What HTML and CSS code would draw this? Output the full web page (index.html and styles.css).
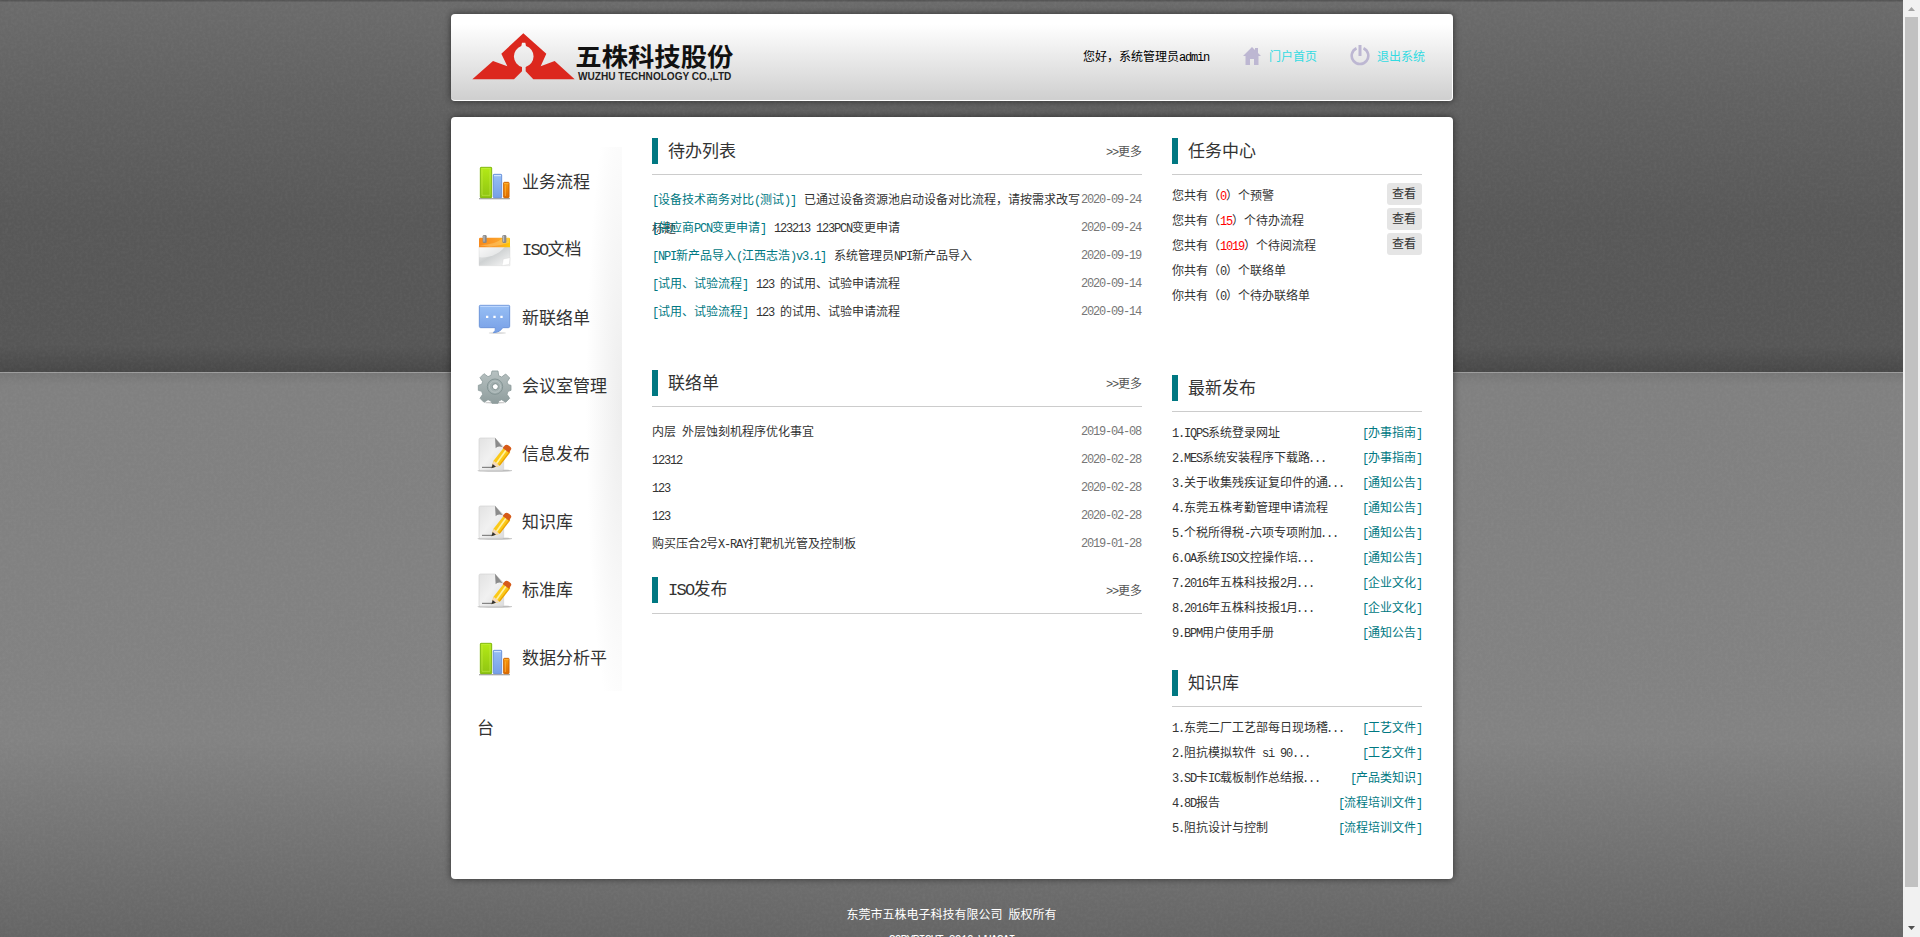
FILE: index.html
```html
<!DOCTYPE html>
<html lang="zh-CN">
<head>
<meta charset="utf-8">
<title>五株科技股份</title>
<link rel="stylesheet" href="styles.css">
</head>
<body>
<svg class="defs" width="0" height="0" aria-hidden="true">
  <defs>
    <linearGradient id="green" x2="0" y2="1"><stop offset="0" stop-color="#b4ea16"/><stop offset="1" stop-color="#8fc412"/></linearGradient>
    <linearGradient id="blue" x2="0" y2="1"><stop offset="0" stop-color="#97bff5"/><stop offset="1" stop-color="#779fe6"/></linearGradient>
    <linearGradient id="orange" x2="0" y2="1"><stop offset="0" stop-color="#fb9a0c"/><stop offset="1" stop-color="#dd6a00"/></linearGradient>
    <linearGradient id="calTop" x2="1" y2="0"><stop offset="0" stop-color="#f68a1e"/><stop offset=".6" stop-color="#fba02a"/><stop offset="1" stop-color="#ffc800"/></linearGradient>
    <linearGradient id="paper" x2="1" y2="1"><stop offset="0" stop-color="#e2e2e2"/><stop offset=".5" stop-color="#f1f1f1"/><stop offset="1" stop-color="#dcdcdc"/></linearGradient>
    <linearGradient id="calBody" x2="1" y2="1"><stop offset="0" stop-color="#f4f4f4"/><stop offset=".45" stop-color="#cfd2d3"/><stop offset="1" stop-color="#f8f8f8"/></linearGradient>
    <linearGradient id="gearFill" x2="0" y2="1"><stop offset="0" stop-color="#b7c1c1"/><stop offset="1" stop-color="#8f9d9d"/></linearGradient>
    <symbol id="chart" viewBox="108 114 108 204">
      <path d="M117 264h93v4h-93z" fill="#a9a9a9"/>
      <rect x="121" y="172" width="34" height="91" rx="2" fill="url(#green)" stroke="#7fb70b" stroke-width="3"/>
      <path d="M124 175h28M126 178v78h24v-78" fill="none" stroke="#d0f55e" stroke-width="2" opacity=".7"/>
      <rect x="160" y="193" width="25" height="70" rx="2" fill="url(#blue)" stroke="#6d95dc" stroke-width="3"/>
      <path d="M162 197h21" stroke="#dcebff" stroke-width="3"/>
      <rect x="191" y="217" width="16" height="46" rx="2" fill="url(#orange)" stroke="#cf6500" stroke-width="3"/>
      <path d="M192 221h14M196 226v32" stroke="#ffc04c" stroke-width="2"/>
    </symbol>
    <symbol id="calendar" viewBox="108 114 108 204">
      <path d="M117 205h93v58h-93z" fill="url(#calBody)" stroke="#cfcfcf"/>
      <path d="M118 238c34 2 60-10 78-33h-78z" fill="#fff" opacity=".5"/>
      <path d="M186 263l4-20 20-4-2 20z" fill="#fff" stroke="#d0d0d0"/>
      <path d="M117 183q0-4 4-4h85q4 0 4 4v25h-93z" fill="url(#calTop)"/>
      <path d="M118 202q50-2 70-22h20v14q-30 10-60 12z" fill="#ffd27a" opacity=".45"/>
      <rect x="128" y="171" width="12" height="24" rx="4" fill="#888"/><rect x="187" y="171" width="12" height="24" rx="4" fill="#888"/>
      <path d="M132 173v18M191 173v18" stroke="#c9c9c9" stroke-width="3"/>
    </symbol>
    <symbol id="chat" viewBox="108 114 108 204">
      <ellipse cx="172" cy="261" rx="26" ry="3" fill="#ddd"/>
      <path d="M121 178h85q3 0 3 3v60q0 4-4 4h-17q-8 14-28 15q8-6 6-15h-44q-4 0-4-4v-60q0-3 3-3z" fill="url(#blue)" stroke="#6c95d9" stroke-width="3"/>
      <path d="M121 181h85" stroke="#c6ddff" stroke-width="3"/>
      <path d="M138 209h7v7h-7zM160 209h7v7h-7zM181 209h7v7h-7z" fill="#fff"/>
    </symbol>
    <symbol id="gear" viewBox="108 114 108 204">
      <ellipse cx="165" cy="266" rx="30" ry="3" fill="#ccc"/>
      <path d="M156 171h18l2 14 9 4 12-9 12 12-8 12 4 8 8 2v15l-9 3-3 9 8 12-12 12-12-8-9 4-2 7h-18l-3-7-9-4-12 8-12-12 8-12-3-9-10-3v-15l10-3 3-8-8-12 12-12 12 9 9-4z" fill="url(#gearFill)" stroke="#8d9b9b" stroke-width="2.5" stroke-linejoin="round"/>
      <circle cx="165" cy="218" r="23" fill="#a3b0b0" stroke="#849494" stroke-width="3"/>
      <circle cx="165" cy="218" r="17" fill="none" stroke="#b6c1c1" stroke-width="3"/>
      <circle cx="166" cy="218" r="9" fill="#fff" stroke="#7f8e8e" stroke-width="3"/>
    </symbol>
    <symbol id="note" viewBox="108 114 108 204">
      <ellipse cx="165" cy="266" rx="53" ry="3.5" fill="#bdbdbd"/>
      <path d="M121 168h44l26 27v65q0 5-5 5h-65q-4 0-4-5v-87q0-5 4-5z" fill="url(#paper)" stroke="#d2d2d2" stroke-width="2"/>
      <path d="M165 167l23 28q-16-5-21 4z" fill="#8b8b8b"/>
      <path d="M126 256h34" stroke="#555" stroke-width="2.5"/>
      <path d="M155 257l5-20 33-42 18 13-34 44z" fill="#fbc918"/>
      <path d="M169 245l31-43" stroke="#fff1a0" stroke-width="5"/>
      <path d="M178 250l31-40" stroke="#eba400" stroke-width="4"/>
      <path d="M155 257l6-21 17 15z" fill="#f4d9bd"/>
      <path d="M154 259l4-13 10 8z" fill="#333"/>
      <path d="M188 198l7-8q4-4 12 1t7 10l-7 11z" fill="#d65a18"/>
    </symbol>
  </defs>
</svg>
<div class="screen">
  <div class="page">
    <svg class="grain" width="1903" height="937" aria-hidden="true">
      <filter id="grain" x="0" y="0" width="100%" height="100%"><feTurbulence type="fractalNoise" baseFrequency=".35" numOctaves="2" seed="4"/><feColorMatrix values="0 0 0 0 1  0 0 0 0 1  0 0 0 0 1  1 0 0 0 -.35"/></filter>
      <rect width="1903" height="937" filter="url(#grain)"/>
    </svg>
    <header class="header">
      <svg class="logo" width="262" height="50" viewBox="96 95 786 150">
        <path d="M250 99L319 160l-17 38 42-16 60 55H280l-23-24v-13a33 33 0 0 0 1-63l-2-10h-10l-2 10a33 33 0 0 0 2 63v13l-24 24H97l62-55 43 16-18-38z" fill="#dc281e"/>
        <text class="logo-cn" x="406" y="197" textLength="474" lengthAdjust="spacingAndGlyphs">五株科技股份</text>
        <text class="logo-en" x="414" y="238" textLength="460" lengthAdjust="spacingAndGlyphs">WUZHU TECHNOLOGY CO.,LTD</text>
      </svg>
      <span class="hello">您好，系统管理员<span class="m">admin</span></span>
      <a class="top-link home">
        <svg width="18" height="18" viewBox="0 0 18 18"><path d="M9 0l3 3V1h3v5l3 3h-2.500v9h-4.500v-6H7v6H2.500V9H0z" fill="#bdb7d2"/></svg>
        <span>门户首页</span>
      </a>
      <a class="top-link quit">
        <svg width="20" height="21" viewBox="0 0 20 21"><path d="M6.500 3.200a8.300 8.300 0 1 0 7 0" fill="none" stroke="#bdb7d2" stroke-width="2.600"/><path d="M8.500 0h3v11h-3z" fill="#bdb7d2"/></svg>
        <span>退出系统</span>
      </a>
    </header>
    <main class="main">
      <nav class="side">
        <ul class="menu">
          <li><svg><use href="#chart"/></svg><span>业务流程</span></li>
          <li><svg><use href="#calendar"/></svg><span><span class="m">ISO</span>文档</span></li>
          <li><svg><use href="#chat"/></svg><span>新联络单</span></li>
          <li><svg><use href="#gear"/></svg><span>会议室管理</span></li>
          <li><svg><use href="#note"/></svg><span>信息发布</span></li>
          <li><svg><use href="#note"/></svg><span>知识库</span></li>
          <li><svg><use href="#note"/></svg><span>标准库</span></li>
          <li><svg><use href="#chart"/></svg><span>数据分析平</span></li>
        </ul>
        <div class="menu-rest">台</div>
      </nav>
      <div class="middle">
        <section class="todo">
          <h2><span>待办列表</span><a class="more"><span class="m">&gt;&gt;</span>更多</a></h2>
          <ul class="list">
            <li><p><a><span class="m">[</span>设备技术商务对比<span class="m">(</span>测试<span class="m">)]</span></a>已通过设备资源池启动设备对比流程，请按需求改写标题</p><time>2020-09-24</time></li>
            <li><p><a><span class="m">[</span>供应商<span class="m">PCN</span>变更申请<span class="m">]</span></a><span class="m">123213 123PCN</span>变更申请</p><time>2020-09-24</time></li>
            <li><p><a><span class="m">[NPI</span>新产品导入<span class="m">(</span>江西志浩<span class="m">)v3.1]</span></a>系统管理员<span class="m">NPI</span>新产品导入</p><time>2020-09-19</time></li>
            <li><p><a><span class="m">[</span>试用、试验流程<span class="m">]</span></a><span class="m">123 </span>的试用、试验申请流程</p><time>2020-09-14</time></li>
            <li><p><a><span class="m">[</span>试用、试验流程<span class="m">]</span></a><span class="m">123 </span>的试用、试验申请流程</p><time>2020-09-14</time></li>
          </ul>
        </section>
        <section class="contact">
          <h2><span>联络单</span><a class="more"><span class="m">&gt;&gt;</span>更多</a></h2>
          <ul class="list">
            <li><p>内层<span class="m"> </span>外层蚀刻机程序优化事宜</p><time>2019-04-08</time></li>
            <li><p><span class="m">12312</span></p><time>2020-02-28</time></li>
            <li><p><span class="m">123</span></p><time>2020-02-28</time></li>
            <li><p><span class="m">123</span></p><time>2020-02-28</time></li>
            <li><p>购买压合<span class="m">2</span>号<span class="m">X-RAY</span>打靶机光管及控制板</p><time>2019-01-28</time></li>
          </ul>
        </section>
        <section>
          <h2><span><span class="m">ISO</span>发布</span><a class="more"><span class="m">&gt;&gt;</span>更多</a></h2>
        </section>
      </div>
      <div class="right">
        <section class="tasks">
          <h2><span>任务中心</span></h2>
          <ul class="short">
            <li><p>您共有（<b class="m">0</b>）个预警</p><button>查看</button></li>
            <li><p>您共有（<b class="m">15</b>）个待办流程</p><button>查看</button></li>
            <li><p>您共有（<b class="m">1019</b>）个待阅流程</p><button>查看</button></li>
            <li><p>你共有（<span class="m">0</span>）个联络单</p></li>
            <li><p>你共有（<span class="m">0</span>）个待办联络单</p></li>
          </ul>
        </section>
        <section class="news">
          <h2><span>最新发布</span></h2>
          <ul class="short">
            <li><p><span class="m">1.IQPS</span>系统登录网址</p><a><span class="m">[</span>办事指南<span class="m">]</span></a></li>
            <li><p><span class="m">2.MES</span>系统安装程序下载路<span class="m dots">...</span></p><a><span class="m">[</span>办事指南<span class="m">]</span></a></li>
            <li><p><span class="m">3.</span>关于收集残疾证复印件的通<span class="m dots">...</span></p><a><span class="m">[</span>通知公告<span class="m">]</span></a></li>
            <li><p><span class="m">4.</span>东莞五株考勤管理申请流程</p><a><span class="m">[</span>通知公告<span class="m">]</span></a></li>
            <li><p><span class="m">5.</span>个税所得税<span class="m">-</span>六项专项附加<span class="m dots">...</span></p><a><span class="m">[</span>通知公告<span class="m">]</span></a></li>
            <li><p><span class="m">6.OA</span>系统<span class="m">ISO</span>文控操作培<span class="m dots">...</span></p><a><span class="m">[</span>通知公告<span class="m">]</span></a></li>
            <li><p><span class="m">7.2016</span>年五株科技报<span class="m">2</span>月<span class="m dots">...</span></p><a><span class="m">[</span>企业文化<span class="m">]</span></a></li>
            <li><p><span class="m">8.2016</span>年五株科技报<span class="m">1</span>月<span class="m dots">...</span></p><a><span class="m">[</span>企业文化<span class="m">]</span></a></li>
            <li><p><span class="m">9.BPM</span>用户使用手册</p><a><span class="m">[</span>通知公告<span class="m">]</span></a></li>
          </ul>
        </section>
        <section>
          <h2><span>知识库</span></h2>
          <ul class="short">
            <li><p><span class="m">1.</span>东莞二厂工艺部每日现场稽<span class="m dots">...</span></p><a><span class="m">[</span>工艺文件<span class="m">]</span></a></li>
            <li><p><span class="m">2.</span>阻抗模拟软件<span class="m"> si 90...</span></p><a><span class="m">[</span>工艺文件<span class="m">]</span></a></li>
            <li><p><span class="m">3.SD</span>卡<span class="m">IC</span>载板制作总结报<span class="m dots">...</span></p><a><span class="m">[</span>产品类知识<span class="m">]</span></a></li>
            <li><p><span class="m">4.8D</span>报告</p><a><span class="m">[</span>流程培训文件<span class="m">]</span></a></li>
            <li><p><span class="m">5.</span>阻抗设计与控制</p><a><span class="m">[</span>流程培训文件<span class="m">]</span></a></li>
          </ul>
        </section>
      </div>
    </main>
    <footer class="footer">
      <div>东莞市五株电子科技有限公司<span class="m"> </span>版权所有</div>
      <div><span class="m">COPYRIGHT 2016 WUAGAI</span></div>
    </footer>
  </div>
  <div class="scrollbar">
    <svg width="17" height="17"><path d="M5 11h7L8.500 7z" fill="#a3a3a3"/></svg>
    <div class="thumb"></div>
    <svg width="17" height="17"><path d="M5 6h7L8.500 10z" fill="#505050"/></svg>
  </div>
</div>
</body>
</html>
```
FILE: styles.css
```css
* { box-sizing: border-box; margin: 0; padding: 0; }
html, body { height: 937px; overflow: hidden; }
body {
  font-family: "Liberation Serif", "Noto Sans CJK SC", sans-serif;
  font-size: 12px;
  color: #333;
}
ul { list-style: none; }
a { color: #007882; text-decoration: none; }
.defs { position: absolute; }
/* half-width runs: every character takes half an em */
.m, time {
  font-family: "Liberation Mono", monospace;
  letter-spacing: -.1em;
  white-space: pre;
}
.dots { margin-left: -2px; }
b.m { font-weight: normal; color: #f00; }

.screen { display: grid; grid-template-columns: 1903px 17px; height: 937px; }
.page {
  position: relative;
  height: 937px;
  overflow: hidden;
  padding-top: 14px;
  background: linear-gradient(180deg,
    #555 0, #555 1px, #6b6b6b 2px, #616161 100px, #585858 220px, #565656 345px,
    #484848 372px, #9c9c9c 372px, #9c9c9c 373px, #777 373px, #808080 385px,
    #828282 740px, #656565 937px);
}
.grain { position: absolute; left: 0; top: 0; opacity: .07; }

.header {
  position: relative;
  display: flex;
  align-items: center;
  width: 1002px;
  height: 87px;
  margin: 0 auto 16px 451px;
  padding-left: 21px;
  border: solid #fff;
  border-width: 0 1px 1px 0;
  border-radius: 4px;
  background: linear-gradient(#fff 12%, #d0d0d0 98%);
  box-shadow: 0 0 7px rgba(0, 0, 0, .55);
}
.logo { overflow: visible; }
.logo-cn { font: 700 74px "Noto Sans CJK SC", sans-serif; fill: #111; }
.logo-en { font: 700 31px "Liberation Sans", sans-serif; fill: #222; }
.hello { margin: -3px 0 0 349px; width: 160px; color: #000; white-space: nowrap; }
.top-link { display: flex; align-items: center; margin-top: -3px; color: #33dbe2; }
.home { gap: 8px; width: 107px; }
.quit { gap: 7px; }

.main {
  position: relative;
  display: flex;
  width: 1002px;
  height: 762px;
  margin-left: 451px;
  padding-top: 21px;
  border-radius: 4px;
  background: #fff;
  box-shadow: 0 0 7px rgba(0, 0, 0, .55);
}
.side { width: 146px; margin: 9px 30px 0 25px; font-size: 17px; }
.menu { background: radial-gradient(ellipse 36px 330px at 100% 48%, #ededed, #fff); }
.menu li { display: flex; align-items: center; height: 68px; white-space: nowrap; }
.menu li svg { width: 36px; height: 68px; margin: 1px 10px 0 0; flex: none; }
.menu li > span { line-height: 24px; margin-top: 3px; }
.menu-rest { line-height: 76px; margin-left: 1px; }

.middle { width: 490px; margin-right: 30px; }
.right { width: 250px; }
h2 {
  display: flex;
  align-items: center;
  height: 37px;
  padding-bottom: 11px;
  border-bottom: 1px solid #ccc;
  font-size: 17px;
  font-weight: 400;
  line-height: 22px;
}
h2::before { content: ""; width: 6px; height: 26px; margin-right: 10px; background: #007882; }
h2 > span { padding-top: 2px; }
.more { margin-left: auto; padding-top: 3px; font-size: 12px; color: #555; }
.list { padding-top: 11px; }
.list li { display: flex; justify-content: space-between; height: 28px; line-height: 28px; }
.list p { width: 430px; }
.list p a { margin-right: 8px; }
time { color: #777; margin-right: 1px; }
.todo { height: 232px; }
.contact { height: 207px; }
.short { padding-top: 8px; }
.short li { display: flex; justify-content: space-between; height: 25px; line-height: 26px; white-space: nowrap; }
.tasks { height: 237px; }
.news { height: 295px; }
button {
  width: 35px;
  height: 22px;
  padding-right: 1px;
  border: 0;
  border-radius: 3px;
  background: #e5e5e5;
  font: inherit;
  line-height: 22px;
  color: #333;
}
.footer {
  position: relative;
  padding-top: 24px;
  line-height: 24px;
  text-align: center;
  color: #fff;
}

.scrollbar { display: flex; flex-direction: column; background: #f1f1f1; }
.thumb { width: 13px; height: 870px; margin: 0 2px 33px; background: #c1c1c1; }
```
